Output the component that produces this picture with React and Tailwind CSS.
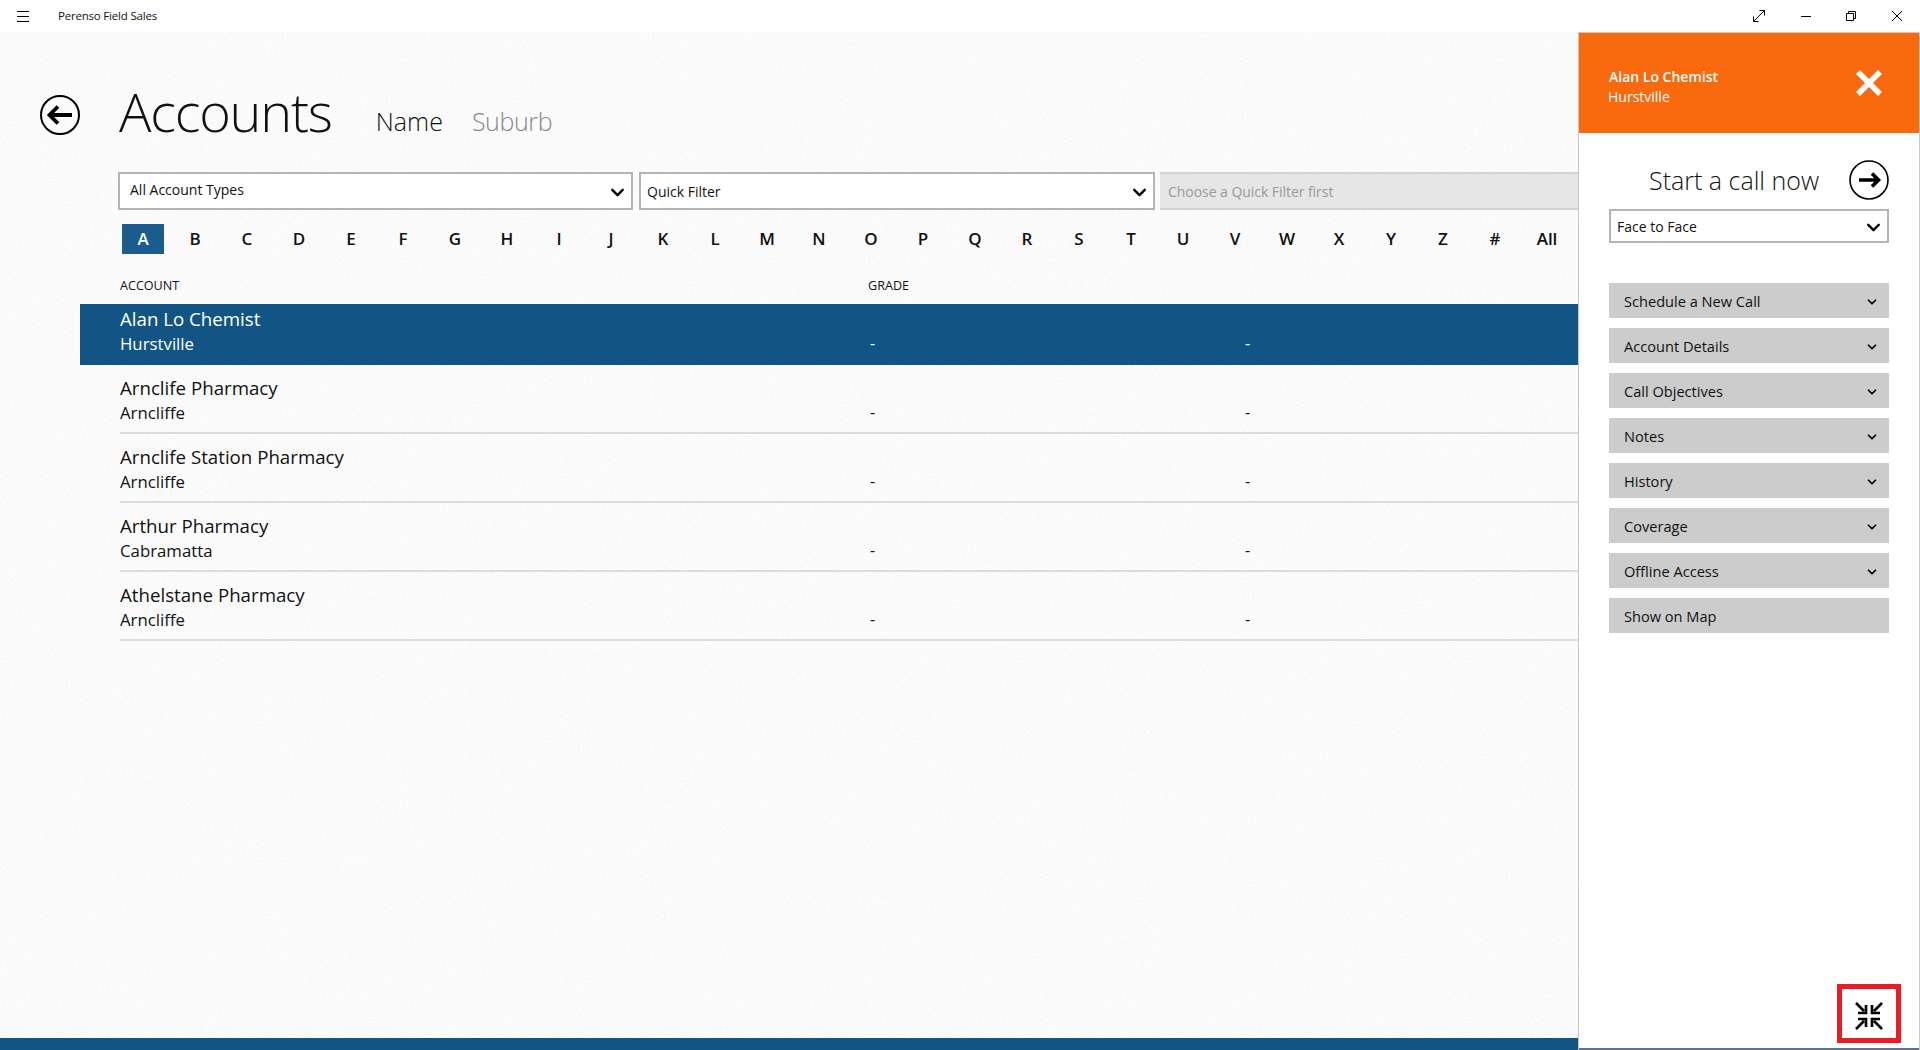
import { ChevronDown } from "lucide-react";

const letters = "ABCDEFGHIJKLMNOPQRSTUVWXYZ#".split("");

const accounts = [
    { name: "Alan Lo Chemist", suburb: "Hurstville", selected: true },
    { name: "Arnclife Pharmacy", suburb: "Arncliffe" },
    { name: "Arnclife Station Pharmacy", suburb: "Arncliffe" },
    { name: "Arthur Pharmacy", suburb: "Cabramatta" },
    { name: "Athelstane Pharmacy", suburb: "Arncliffe" },
];

const sections = [
    { label: "Schedule a New Call", arrow: true },
    { label: "Account Details", arrow: true },
    { label: "Call Objectives", arrow: true },
    { label: "Notes", arrow: true },
    { label: "History", arrow: true },
    { label: "Coverage", arrow: true },
    { label: "Offline Access", arrow: true },
    { label: "Show on Map", arrow: false },
];

const Select = ({ label, className, labelClassName }) => (
    <div className={`flex items-center justify-between border-2 border-[#b4b4b4] bg-white ${className}`}>
        <span className={`text-[14px] text-[#111] ${labelClassName}`}>{label}</span>
        <ChevronDown size={21} strokeWidth={2.7} className="mt-[2px] text-black" />
    </div>
);

const BackArrow = () => (
    <svg viewBox="0 0 40 40" className="h-10 w-10">
        <circle cx="20" cy="20" r="19" fill="none" stroke="#000" strokeWidth="2" />
        <path d="M10 20h22M18 11.5L9.5 20l8.5 8.5" fill="none" stroke="#000" strokeWidth="3.8" />
    </svg>
);

const StartArrow = () => (
    <svg viewBox="0 0 40 40" className="h-10 w-10">
        <circle cx="20" cy="20" r="19" fill="none" stroke="#000" strokeWidth="1.6" />
        <path d="M10 20h19M23 13.5l6.5 6.5-6.5 6.5" fill="none" stroke="#000" strokeWidth="3.6" />
    </svg>
);

const TitleBar = () => (
    <div className="flex h-8 shrink-0 items-center bg-white">
        <div className="ml-[17px] flex h-[11px] w-3 flex-col justify-between">
            <div className="h-px bg-black" />
            <div className="h-px bg-black" />
            <div className="h-px bg-black" />
        </div>
        <span className="ml-[29px] text-[11.5px] tracking-[-0.2px] text-[#111]">Perenso Field Sales</span>
        <div className="ml-auto flex items-center">
            <svg viewBox="0 0 12 12" className="h-3 w-3" fill="none" stroke="#000">
                <path d="M.5 11.5l11-11M6.5.5h5v5M.5 6.5v5h5" />
            </svg>
            <div className="ml-[36px] h-px w-[10px] bg-black" />
            <svg viewBox="0 0 10 10" className="ml-[35px] h-[10px] w-[10px]" fill="none" stroke="#000">
                <path d="M.5 2.5h7v7h-7zM2.5 2.5v-2h7v7h-2" />
            </svg>
            <svg viewBox="0 0 10 10" className="ml-[36px] mr-[18px] h-[10px] w-[10px]" fill="none" stroke="#000">
                <path d="M0 0l10 10M10 0L0 10" />
            </svg>
        </div>
    </div>
);

// faint paper grain behind the account list
const Grain = () => (
    <svg className="pointer-events-none absolute inset-0 h-full w-full">
        <filter id="grain" colorInterpolationFilters="sRGB">
            <feTurbulence type="fractalNoise" baseFrequency="0.7" numOctaves="2" seed="4" />
            <feColorMatrix values="0 0 0 0 0  0 0 0 0 0  0 0 0 0 0  0.07 0 0 0 -0.025" />
        </filter>
        <rect width="100%" height="100%" filter="url(#grain)" />
    </svg>
);

const AccountRow = ({ account }) => {
    const tone = account.selected ? "bg-[#125584] text-white pl-10 -ml-10" : "border-b-2 border-[#dcdcdc] text-[#111]";
    return (
        <div className={`mb-2 h-[61px] ${tone}`}>
            <div className="grid h-full grid-cols-[748px_375px_1fr]">
                <div className="flex flex-col pt-px">
                    <span className="text-[18.7px] leading-7">{account.name}</span>
                    <span className="text-[16.8px] leading-[21px]">{account.suburb}</span>
                </div>
                <span className="pl-[2px] pt-[27px] text-[16px] leading-6">-</span>
                <span className="pl-[2px] pt-[27px] text-[16px] leading-6">-</span>
            </div>
        </div>
    );
};

const SidePanel = () => (
    <aside className="relative flex w-[342px] shrink-0 flex-col border-x border-t border-[#c8c8c8] bg-white">
        <div className="flex h-[100px] items-center justify-between bg-[#f96a0e] pl-[29px] pr-[37px] text-white">
            <div className="flex flex-col pt-[8px]">
                <span className="pl-px text-[14px] font-semibold leading-5">Alan Lo Chemist</span>
                <span className="text-[14px] leading-5">Hurstville</span>
            </div>
            <svg viewBox="0 0 26 26" className="h-[26px] w-[26px]" fill="none" stroke="#fff" strokeWidth="5.5">
                <path d="M2 2l22 22M24 2L2 24" />
            </svg>
        </div>
        <div className="flex flex-1 flex-col pl-[30px] pr-[30px]">
            <div className="mt-[27px] flex items-center justify-between pl-[40px]">
                <span className="text-[25px] font-light leading-10 text-[#111]">Start a call now</span>
                <StartArrow />
            </div>
            <Select label="Face to Face" className="mt-[9px] h-[34px] pl-[6px] pr-[3px]" />
            <div className="mt-10 flex flex-col gap-[10px]">
                {sections.map((section) => (
                    <div key={section.label} className="flex h-[35px] items-center justify-between bg-[#cccccc] pl-[15px] pr-[10px]">
                        <span className="pt-[3px] text-[14.6px] text-[#111]">{section.label}</span>
                        {section.arrow && <ChevronDown size={14} strokeWidth={3} className="mt-[2px] text-black" />}
                    </div>
                ))}
            </div>
            <div className="mb-[5px] -mr-3 mt-auto flex h-[59px] w-16 items-center justify-center self-end border-[5px] border-[#ed1c24] pt-[5px]">
                <svg viewBox="0 0 28 28" className="h-7 w-7" fill="none" stroke="#000" strokeWidth="2.6">
                    <path d="M1 1l8 8M11 3v8H3M27 1l-8 8M17 3v8h8M1 27l8-8M11 25v-8H3M27 27l-8-8M17 25v-8h8" />
                </svg>
            </div>
        </div>
        <div className="h-[2px] bg-[#5c7489]" />
    </aside>
);

const App = () => (
    <div className="flex h-[1050px] w-[1920px] flex-col overflow-hidden bg-[#fdfdfd] font-['Open_Sans',sans-serif]">
        <TitleBar />
        <div className="flex min-h-0 flex-1">
            <main className="relative flex min-w-0 flex-1 flex-col">
                <Grain />
                <div className="relative flex flex-1 flex-col">
                    <div className="flex h-[140px] items-start pl-10 pt-[63px]">
                        <BackArrow />
                        <h1 className="ml-[39px] -mt-[22px] text-[54px] font-light leading-[76px] tracking-[-1.2px] text-[#111]">Accounts</h1>
                        <span className="ml-[44px] mt-[8px] text-[25px] font-light leading-9 text-[#111]">Name</span>
                        <span className="ml-[29px] mt-[8px] text-[25px] font-light leading-9 tracking-[-0.4px] text-[#888]">Suburb</span>
                    </div>
                    <div className="pl-[118px]">
                        <div className="flex h-[38px] gap-[6px]">
                            <Select label="All Account Types" labelClassName="-mt-[4px]" className="w-[515px] pl-[10px] pr-[3px]" />
                            <Select label="Quick Filter" labelClassName="mt-px" className="w-[516px] pl-[6px] pr-[3px]" />
                            <div className="-ml-px flex flex-1 items-center border-y-2 border-[#d2d2d2] bg-[#e6e6e6] pl-2 pt-px text-[14px] tracking-[-0.05px] text-[#999]">
                                Choose a Quick Filter first
                            </div>
                        </div>
                        <div className="mt-[14px] flex h-[30px] items-center pl-[4px]">
                            {letters.map((letter) => (
                                <span
                                    key={letter}
                                    className={`mr-[10px] flex h-[30px] w-[42px] items-center justify-center text-[17px] font-semibold ${letter === "A" ? "bg-[#1a5c8e] text-white" : "text-[#111]"}`}
                                >
                                    {letter}
                                </span>
                            ))}
                            <span className="w-[42px] text-center text-[17px] font-semibold text-[#111]">All</span>
                        </div>
                        <div className="mt-[23px] grid h-[27px] grid-cols-[748px_1fr] pl-[2px] text-[12.6px] font-medium leading-[18px] text-[#111]">
                            <span>ACCOUNT</span>
                            <span>GRADE</span>
                        </div>
                        <div className="pl-[2px]">
                            {accounts.map((account) => (
                                <AccountRow key={account.name} account={account} />
                            ))}
                        </div>
                    </div>
                </div>
                <div className="relative h-3 bg-[#125584]" />
            </main>
            <SidePanel />
        </div>
    </div>
);

export default App;
